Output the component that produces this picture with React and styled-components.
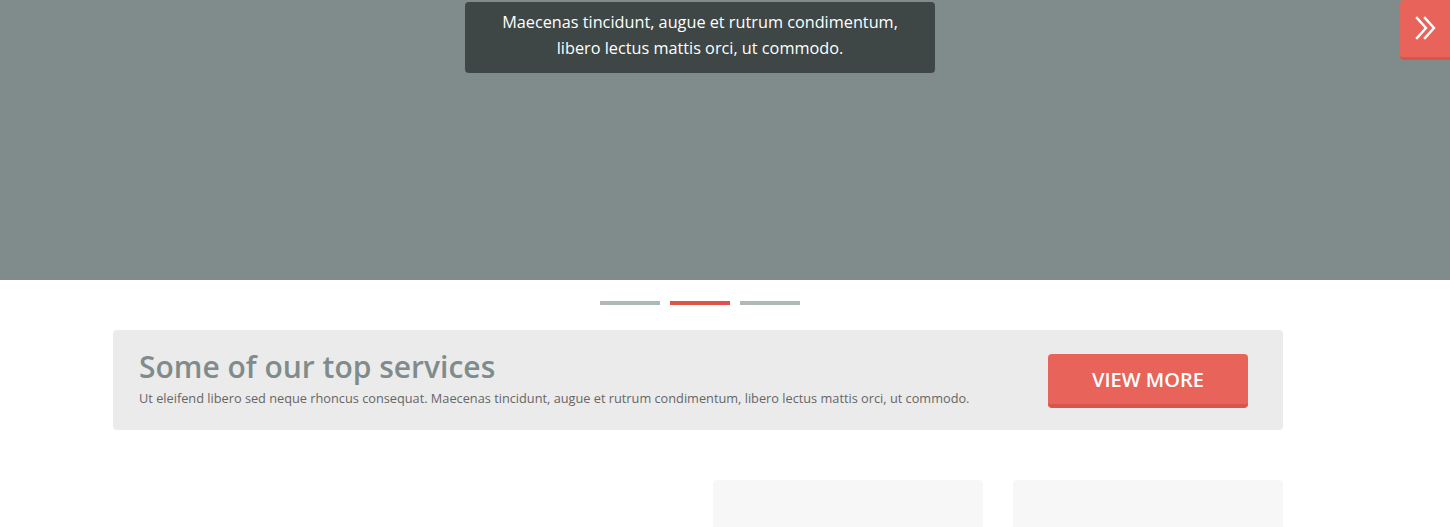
import React from "react";
import styled, { createGlobalStyle } from "styled-components";

const GlobalStyle = createGlobalStyle`
  body {
    margin: 0;
    font-family: "Open Sans", "Liberation Sans", sans-serif;
    background: #fff;
    overflow: hidden;
  }
`;

const Hero = styled.section`
  position: relative;
  height: 280px;
  background: #7f8c8b;
`;

const Stage = styled.div`
  width: 1400px;
  display: flex;
  justify-content: center;
  padding-top: 2px;
`;

const Caption = styled.div`
  width: 470px;
  box-sizing: border-box;
  padding: 7px 20px 12px;
  background: #3e4746;
  border-radius: 4px;
  color: #fff;
  font-size: 16.25px;
  line-height: 26px;
  text-align: center;
`;

const NextButton = styled.button`
  position: absolute;
  top: 0;
  right: 0;
  width: 50px;
  height: 60px;
  border: 0;
  border-bottom: 3px solid #d9554b;
  border-radius: 4px 0 0 4px;
  background: #e8645a;
  display: flex;
  align-items: center;
  justify-content: center;
  padding: 0 0 2px 2px;
  cursor: pointer;
`;

const Dots = styled.div`
  width: 1400px;
  display: flex;
  justify-content: center;
  gap: 10px;
  padding: 21px 0 25px;
`;

const Dot = styled.span`
  width: 60px;
  height: 4px;
  background: ${(p) => (p.active ? "#e0534c" : "#b1b8b8")};
`;

const Container = styled.div`
  width: 1170px;
  margin-left: 113px;
`;

const Banner = styled.div`
  height: 100px;
  box-sizing: border-box;
  background: #ebebeb;
  border-radius: 4px;
  display: flex;
  align-items: center;
  justify-content: space-between;
  padding: 0 35px 0 26px;
`;

const BannerText = styled.div`
  display: flex;
  flex-direction: column;
  margin-top: -7px;
`;

const Title = styled.h2`
  margin: 0;
  font-size: 30px;
  font-weight: 600;
  line-height: 40px;
  color: #7f8c8b;
`;

const Subtitle = styled.p`
  margin: 2px 0 0;
  font-size: 12.75px;
  line-height: 18px;
  color: #666;
`;

const ViewMore = styled.button`
  width: 200px;
  height: 54px;
  margin-top: 2px;
  border: 0;
  border-bottom: 4px solid #d9554b;
  border-radius: 4px;
  background: #e8645a;
  color: #fff;
  font-family: "Open Sans", "Liberation Sans", sans-serif;
  font-size: 20px;
  font-weight: 600;
  text-transform: uppercase;
  padding: 0;
  cursor: pointer;
`;

const Cards = styled.div`
  display: grid;
  grid-template-columns: repeat(4, 270px);
  gap: 30px;
  margin-top: 50px;
`;

const Card = styled.div`
  height: 200px;
  border-radius: 4px;
  background: ${(p) => (p.blank ? "transparent" : "#f7f7f7")};
`;

const ChevronsRight = () => (
  <svg width="24" height="26" viewBox="0 0 24 26" fill="none" stroke="#fff" strokeWidth="2.4" strokeLinecap="square">
    <polyline points="3,3 12,13 3,23" />
    <polyline points="11,3 20,13 11,23" />
  </svg>
);

const App = () => (
  <>
    <GlobalStyle />
    <Hero>
      <Stage>
        <Caption>
          Maecenas tincidunt, augue et rutrum condimentum,
          <br />
          libero lectus mattis orci, ut commodo.
        </Caption>
      </Stage>
      <NextButton aria-label="Next">
        <ChevronsRight />
      </NextButton>
    </Hero>
    <Dots>
      <Dot />
      <Dot active />
      <Dot />
    </Dots>
    <Container>
      <Banner>
        <BannerText>
          <Title>Some of our top services</Title>
          <Subtitle>
            Ut eleifend libero sed neque rhoncus consequat. Maecenas tincidunt, augue et rutrum condimentum, libero lectus mattis orci, ut commodo.
          </Subtitle>
        </BannerText>
        <ViewMore>View more</ViewMore>
      </Banner>
      <Cards>
        <Card blank />
        <Card blank />
        <Card />
        <Card />
      </Cards>
    </Container>
  </>
);

export default App;
